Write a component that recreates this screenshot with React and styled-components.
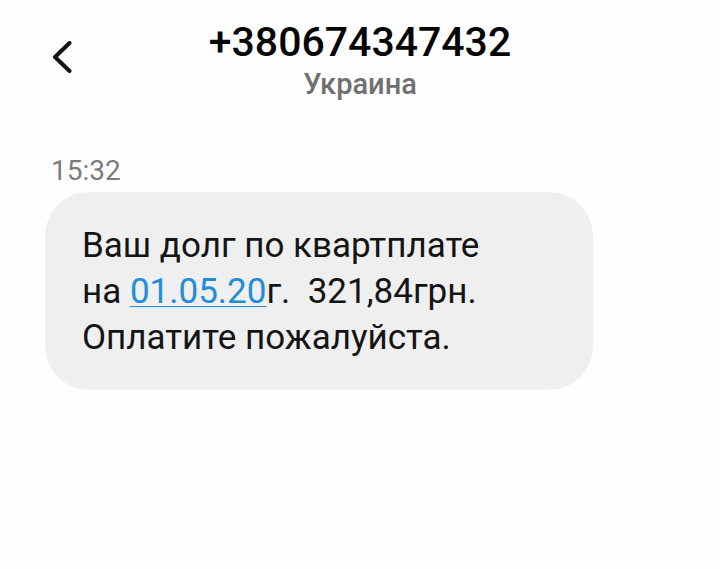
import React from 'react';
import styled, { createGlobalStyle } from 'styled-components';

const GlobalStyle = createGlobalStyle`
  * { box-sizing: border-box; }
  body {
    margin: 0;
    background: #fefefe;
    color: #141414;
    font-family: Roboto, "Noto Sans", sans-serif;
  }
`;

const Header = styled.header`
  display: grid;
  grid-template-columns: 40px 1fr 40px;
  align-items: center;
  padding: 17px 40px 0;
`;

const BackButton = styled.button`
  display: flex;
  justify-content: center;
  padding: 0;
  border: 0;
  background: none;
  color: #141414;
  cursor: pointer;
`;

const Contact = styled.div`
  text-align: center;
`;

const PhoneNumber = styled.h1`
  margin: 0;
  color: #050505;
  font-size: 41px;
  line-height: 50px;
  font-weight: 500;
`;

const Country = styled.p`
  margin: 0;
  color: #707070;
  font-size: 29px;
  line-height: 34px;
  font-weight: 500;
`;

const Conversation = styled.main`
  padding: 52px 45px;
`;

const Time = styled.time`
  display: block;
  padding-left: 6px;
  color: #7c7c7c;
  font-size: 28px;
  line-height: 36px;
`;

const Bubble = styled.p`
  width: fit-content;
  max-width: 100%;
  min-width: 87%;
  margin: 3px 0 0;
  padding: 31px 37px 29px;
  border-radius: 44px;
  background: #efefef;
  font-size: 35px;
  line-height: 46px;
`;

const DateLink = styled.a`
  color: #228cd8;
  text-decoration-thickness: 1px;
  text-underline-offset: 3px;
`;

export default function App() {
  return (
    <>
      <GlobalStyle />
      <Header>
        <BackButton type="button" aria-label="Назад">
          <svg width="24" height="36" viewBox="0 0 24 36" fill="none" stroke="currentColor" strokeWidth="4" strokeLinecap="round" strokeLinejoin="round" aria-hidden="true">
            <path d="M21.500 2L7 16L21.500 30" />
          </svg>
        </BackButton>
        <Contact>
          <PhoneNumber>+380674347432</PhoneNumber>
          <Country>Украина</Country>
        </Contact>
      </Header>
      <Conversation>
        <Time dateTime="15:32">15:32</Time>
        <Bubble>
          Ваш долг по квартплате<br />
          на <DateLink href="#date">01.05.20</DateLink>г.&nbsp; 321,84грн.<br />
          Оплатите пожалуйста.
        </Bubble>
      </Conversation>
    </>
  );
}
